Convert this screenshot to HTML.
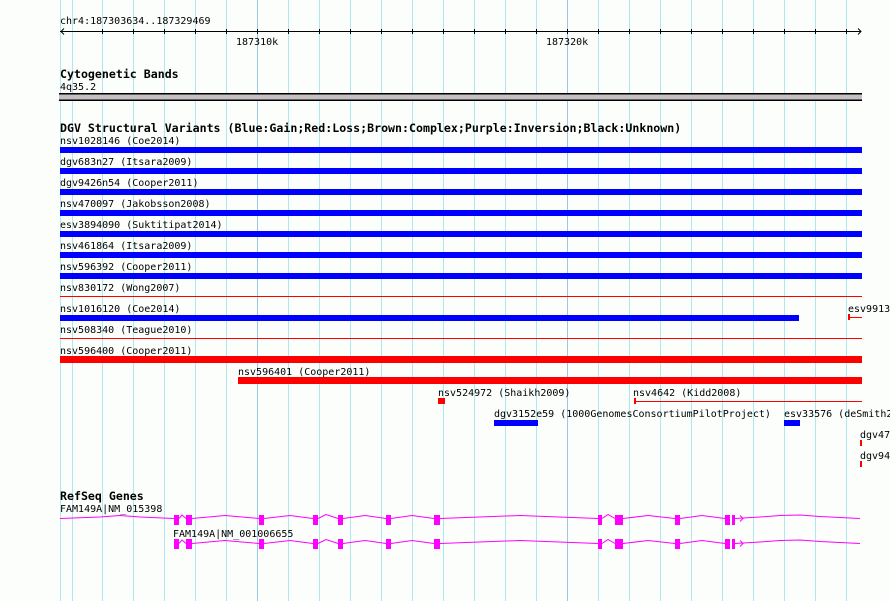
<!DOCTYPE html>
<html><head><style>
html,body{margin:0;padding:0;background:#fcfefc;}
svg{display:block;}
text{font-family:"DejaVu Sans Mono","Liberation Mono",monospace;font-size:10px;fill:#000;}
.b{font-weight:bold;font-size:11.6px;}
</style></head><body>
<svg width="890" height="601" xmlns="http://www.w3.org/2000/svg">
<rect width="890" height="601" fill="#fcfefc"/>
<g stroke="#aee8ee" stroke-width="1">
<line x1="60.5" y1="0" x2="60.5" y2="601"/><line x1="72.5" y1="0" x2="72.5" y2="601"/>
<line x1="102.5" y1="0" x2="102.5" y2="601"/><line x1="133.5" y1="0" x2="133.5" y2="601"/>
<line x1="164.5" y1="0" x2="164.5" y2="601"/><line x1="195.5" y1="0" x2="195.5" y2="601"/>
<line x1="226.5" y1="0" x2="226.5" y2="601"/>
<line x1="288.5" y1="0" x2="288.5" y2="601"/><line x1="319.5" y1="0" x2="319.5" y2="601"/>
<line x1="350.5" y1="0" x2="350.5" y2="601"/><line x1="381.5" y1="0" x2="381.5" y2="601"/>
<line x1="412.5" y1="0" x2="412.5" y2="601"/><line x1="443.5" y1="0" x2="443.5" y2="601"/>
<line x1="474.5" y1="0" x2="474.5" y2="601"/><line x1="505.5" y1="0" x2="505.5" y2="601"/>
<line x1="536.5" y1="0" x2="536.5" y2="601"/>
<line x1="598.5" y1="0" x2="598.5" y2="601"/><line x1="629.5" y1="0" x2="629.5" y2="601"/>
<line x1="660.5" y1="0" x2="660.5" y2="601"/><line x1="691.5" y1="0" x2="691.5" y2="601"/>
<line x1="722.5" y1="0" x2="722.5" y2="601"/><line x1="753.5" y1="0" x2="753.5" y2="601"/>
<line x1="784.5" y1="0" x2="784.5" y2="601"/><line x1="815.5" y1="0" x2="815.5" y2="601"/>
<line x1="846.5" y1="0" x2="846.5" y2="601"/>
</g>
<g stroke="#9cc8e6"><line x1="257.5" y1="0" x2="257.5" y2="601"/><line x1="567.5" y1="0" x2="567.5" y2="601"/></g>

<text x="60" y="24">chr4:187303634..187329469</text>
<g stroke="#000" fill="none">
<line x1="60" y1="31.5" x2="861" y2="31.5"/>
<polyline points="64,28.5 61,31.5 64,34.5"/>
<polyline points="858,28.5 861,31.5 858,34.5"/>
<path d="M102.5 29v5M133.5 29v5M164.5 29v5M195.5 29v5M226.5 29v5M257.5 29v5M288.5 29v5M319.5 29v5M350.5 29v5M381.5 29v5M412.5 29v5M443.5 29v5M474.5 29v5M505.5 29v5M536.5 29v5M567.5 29v5M598.5 29v5M629.5 29v5M660.5 29v5M691.5 29v5M722.5 29v5M753.5 29v5M784.5 29v5M815.5 29v5M846.5 29v5"/>
</g>
<text x="236" y="45">187310k</text>
<text x="546" y="45">187320k</text>

<text class="b" x="60" y="78">Cytogenetic Bands</text>
<text x="60" y="90">4q35.2</text>
<rect x="59" y="93" width="803" height="8" fill="#000"/>
<rect x="59" y="94.5" width="803" height="5" fill="#c4c0c4"/>

<text class="b" x="60" y="132">DGV Structural Variants (Blue:Gain;Red:Loss;Brown:Complex;Purple:Inversion;Black:Unknown)</text>
<g fill="#0000ff">
<rect x="60" y="147" width="802" height="6"/>
<rect x="60" y="168" width="802" height="6"/>
<rect x="60" y="189" width="802" height="6"/>
<rect x="60" y="210" width="802" height="6"/>
<rect x="60" y="231" width="802" height="6"/>
<rect x="60" y="252" width="802" height="6"/>
<rect x="60" y="273" width="802" height="6"/>
<rect x="60" y="315" width="739" height="6"/>
<rect x="494" y="420" width="44" height="6"/>
<rect x="784" y="420" width="16" height="6"/>
</g>
<text x="60" y="144">nsv1028146 (Coe2014)</text>
<text x="60" y="165">dgv683n27 (Itsara2009)</text>
<text x="60" y="186">dgv9426n54 (Cooper2011)</text>
<text x="60" y="207">nsv470097 (Jakobsson2008)</text>
<text x="60" y="228">esv3894090 (Suktitipat2014)</text>
<text x="60" y="249">nsv461864 (Itsara2009)</text>
<text x="60" y="270">nsv596392 (Cooper2011)</text>
<text x="60" y="291">nsv830172 (Wong2007)</text>
<text x="60" y="312">nsv1016120 (Coe2014)</text>
<text x="848" y="312">esv9913</text>
<text x="60" y="333">nsv508340 (Teague2010)</text>
<text x="60" y="354">nsv596400 (Cooper2011)</text>
<text x="238" y="375">nsv596401 (Cooper2011)</text>
<text x="438" y="396">nsv524972 (Shaikh2009)</text>
<text x="633" y="396">nsv4642 (Kidd2008)</text>
<text x="494" y="417">dgv3152e59 (1000GenomesConsortiumPilotProject)</text>
<text x="784" y="417">esv33576 (deSmith2007)</text>
<text x="860" y="438">dgv47</text>
<text x="860" y="459">dgv94</text>
<g fill="#ff0000">
<rect x="60" y="296" width="802" height="1"/>
<rect x="60" y="338" width="802" height="1"/>
<rect x="60" y="356" width="802" height="7"/>
<rect x="238" y="377" width="624" height="7"/>
<rect x="438" y="398" width="7" height="6"/>
<rect x="634" y="401" width="228" height="1"/>
<rect x="634" y="398" width="2" height="6"/>
<rect x="848" y="317" width="14" height="1"/>
<rect x="848" y="314" width="2" height="6"/>
<rect x="860" y="440" width="2" height="6"/>
<rect x="860" y="461" width="2" height="6"/>
</g>

<text class="b" x="60" y="500">RefSeq Genes</text>
<text x="60" y="512">FAM149A|NM_015398</text>
<text x="173" y="537">FAM149A|NM_001006655</text>
<g stroke="#ff00ff" fill="none">
<polyline points="60,518.5 100,517 120,515.5 140,517 174,518.5"/>
<polyline points="179,518.5 182,515 186,518.5"/>
<polyline points="192,518.5 225,515.5 259,518.5"/>
<polyline points="264,518.5 290,515.5 313,518.5"/>
<polyline points="318,518.5 326,514.5 338,518.5"/>
<polyline points="343,518.5 365,515.5 386,518.5"/>
<polyline points="391,518.5 412,515.5 434,518.5"/>
<polyline points="440,518.5 520,515.5 598,518.5"/>
<polyline points="602,518.5 608,514.5 615,518.5"/>
<polyline points="623,518.5 648,515.5 675,518.5"/>
<polyline points="680,518.5 702,515.5 725,518.5"/>
<polyline points="735,518.5 760,517 780,515.5 800,515 820,516.5 840,517.5 860,518.5"/>
<polyline points="740,515.5 743,518.5 740,521.5"/>
<polyline points="179,543.5 182,540 186,543.5"/>
<polyline points="192,543.5 225,540.5 259,543.5"/>
<polyline points="264,543.5 290,540.5 313,543.5"/>
<polyline points="318,543.5 326,539.5 338,543.5"/>
<polyline points="343,543.5 365,540.5 386,543.5"/>
<polyline points="391,543.5 412,540.5 434,543.5"/>
<polyline points="440,543.5 520,540.5 598,543.5"/>
<polyline points="602,543.5 608,539.5 615,543.5"/>
<polyline points="623,543.5 648,540.5 675,543.5"/>
<polyline points="680,543.5 702,540.5 725,543.5"/>
<polyline points="735,543.5 760,542 780,540.5 800,540 820,541.5 840,542.5 860,543.5"/>
<polyline points="740,540.5 743,543.5 740,546.5"/>
</g>
<g fill="#ff00ff">
<rect x="174" y="515" width="5" height="10"/><rect x="186" y="515" width="6" height="10"/>
<rect x="259" y="515" width="5" height="10"/><rect x="313" y="515" width="5" height="10"/>
<rect x="338" y="515" width="5" height="10"/><rect x="386" y="515" width="5" height="10"/>
<rect x="434" y="515" width="6" height="10"/><rect x="598" y="515" width="4" height="10"/>
<rect x="615" y="515" width="8" height="10"/><rect x="675" y="515" width="5" height="10"/>
<rect x="725" y="515" width="5" height="10"/><rect x="732" y="515" width="3" height="10"/>
<rect x="174" y="539" width="5" height="10"/><rect x="186" y="539" width="6" height="10"/>
<rect x="259" y="539" width="5" height="10"/><rect x="313" y="539" width="5" height="10"/>
<rect x="338" y="539" width="5" height="10"/><rect x="386" y="539" width="5" height="10"/>
<rect x="434" y="539" width="6" height="10"/><rect x="598" y="539" width="4" height="10"/>
<rect x="615" y="539" width="8" height="10"/><rect x="675" y="539" width="5" height="10"/>
<rect x="725" y="539" width="5" height="10"/><rect x="732" y="539" width="3" height="10"/>
</g>
</svg>
</body></html>
